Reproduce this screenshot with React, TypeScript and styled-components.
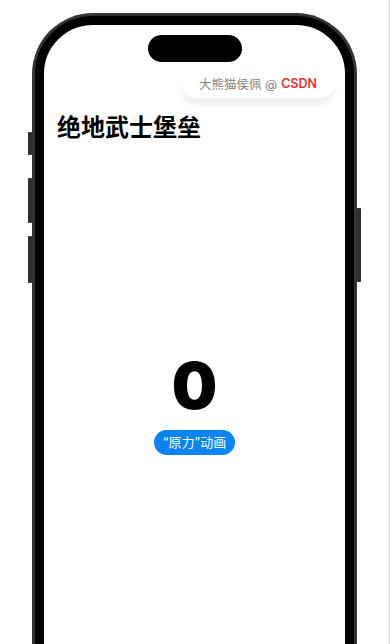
import React from "react";
import styled, { createGlobalStyle } from "styled-components";

const Global = createGlobalStyle`
  html, body { margin: 0; padding: 0; background: #fff; }
  body { width: 390px; height: 644px; overflow: hidden; font-family: "Inter", "Noto Sans CJK SC", sans-serif; }
  #root { width: 390px; height: 644px; }
`;

const Page = styled.div`
  box-sizing: border-box;
  width: 390px;
  height: 644px;
  border-right: 1px solid #d4d4d4;
  padding: 16px 0 0 35px;
  overflow: hidden;
`;

const Frame = styled.div`
  position: relative;
  box-sizing: border-box;
  width: 319px;
  height: 720px;
  border: 9px solid #000;
  border-radius: 58px;
  box-shadow: 0 0 0 3px #343434;
  background: #fff;
`;

const SideButton = styled.div<{ $side: "left" | "right"; $top: number; $h: number }>`
  position: absolute;
  ${(p) => (p.$side === "left" ? "left: -16px;" : "right: -16px;")}
  top: ${(p) => p.$top}px;
  width: 4px;
  height: ${(p) => p.$h}px;
  background: #2e2e2e;
  border-radius: 1px;
`;

const Screen = styled.div`
  position: relative;
  height: 100%;
  border-radius: 49px;
  overflow: hidden;
  display: flex;
  flex-direction: column;
`;

const Island = styled.div`
  position: absolute;
  left: 104px;
  top: 10px;
  width: 94px;
  height: 27px;
  border-radius: 14px;
  background: #000;
`;

const Badge = styled.div`
  position: absolute;
  right: 10px;
  top: 43px;
  height: 30px;
  padding: 0 18px;
  display: flex;
  align-items: center;
  gap: 4px;
  border-radius: 15px;
  background: #fff;
  box-shadow: 0 7px 5px rgba(0, 0, 0, 0.06);
  font-size: 12.5px;
  color: #858585;
  white-space: nowrap;
`;

const Brand = styled.span`
  color: #e8342f;
  font-weight: 600;
`;

const Title = styled.h1`
  margin: 0;
  padding: 86px 0 0 13px;
  font-family: "Noto Sans CJK SC", sans-serif;
  font-size: 24px;
  line-height: 29px;
  font-weight: 700;
  color: #000;
`;

const Center = styled.div`
  margin-top: 214px;
  display: flex;
  flex-direction: column;
  align-items: center;
  gap: 12px;
`;

const Count = styled.div`
  font-family: "Inter", sans-serif;
  font-size: 64px;
  line-height: 64px;
  font-weight: 900;
  color: #000;
`;

const ForceButton = styled.button`
  height: 25px;
  padding: 0 9px;
  border: none;
  border-radius: 13px;
  background: #0a84f5;
  color: #fff;
  font-family: "Inter", "Noto Sans CJK SC", sans-serif;
  font-size: 13px;
  line-height: 25px;
  cursor: pointer;
`;

export default function App() {
  return (
    <>
      <Global />
      <Page>
        <Frame>
          <SideButton $side="left" $top={107} $h={23} />
          <SideButton $side="left" $top={153} $h={45} />
          <SideButton $side="left" $top={211} $h={47} />
          <SideButton $side="right" $top={183} $h={74} />
          <Screen>
            <Island />
            <Badge>
              <span>大熊猫侯佩 @</span>
              <Brand>CSDN</Brand>
            </Badge>
            <Title>绝地武士堡垒</Title>
            <Center>
              <Count>0</Count>
              <ForceButton>“原力”动画</ForceButton>
            </Center>
          </Screen>
        </Frame>
      </Page>
    </>
  );
}
